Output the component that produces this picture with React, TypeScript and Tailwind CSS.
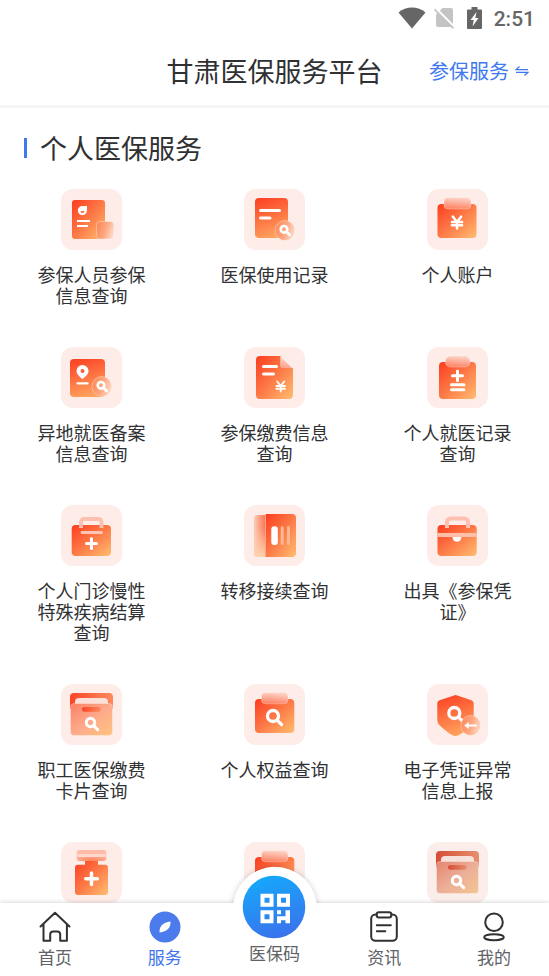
import React from 'react';

type TileProps = { children: React.ReactNode; className?: string };

const Tile = ({ children, className = '' }: TileProps) => (
  <svg viewBox="0 0 61 61" className={`w-[61px] h-[61px] ${className}`} aria-hidden="true">
    <rect width="61" height="61" rx="12" fill="#feece8" />
    {children}
  </svg>
);

const MAIN = 'url(#main)';
const FROST = 'url(#frost)';

// Shared gradients, referenced by every tile
const Gradients = () => (
  <svg width="0" height="0" className="absolute" aria-hidden="true">
    <defs>
      <linearGradient id="main" x1="0" y1="0" x2="1" y2="1">
        <stop offset="0" stopColor="#fb3c1f" />
        <stop offset="0.5" stopColor="#fd7a47" />
        <stop offset="1" stopColor="#ffbd70" />
      </linearGradient>
      <linearGradient id="upright" x1="0.2" y1="0" x2="0.5" y2="1">
        <stop offset="0" stopColor="#fb4425" />
        <stop offset="1" stopColor="#ffa25e" />
      </linearGradient>
      <linearGradient id="frost" x1="0" y1="1" x2="0.2" y2="0">
        <stop offset="0" stopColor="#fc7c5c" />
        <stop offset="1" stopColor="#fdd0c3" />
      </linearGradient>
      <linearGradient id="side" x1="0" y1="0" x2="1" y2="0">
        <stop offset="0" stopColor="#fecdb9" />
        <stop offset="1" stopColor="#fc7350" />
      </linearGradient>
      <linearGradient id="sideFade" x1="0" y1="0" x2="0" y2="1">
        <stop offset="0.3" stopColor="#ffd2ae" stopOpacity="0" />
        <stop offset="1" stopColor="#ffd2ae" />
      </linearGradient>
      <linearGradient id="lens" x1="0" y1="0.3" x2="1" y2="0.6">
        <stop offset="0" stopColor="#fd8a58" />
        <stop offset="0.5" stopColor="#fda57e" />
        <stop offset="1" stopColor="#fedccb" />
      </linearGradient>
      <linearGradient id="folder" x1="0" y1="0" x2="1" y2="1">
        <stop offset="0" stopColor="#fc7f64" />
        <stop offset="0.5" stopColor="#fdaa8c" />
        <stop offset="1" stopColor="#ffc47e" />
      </linearGradient>
      <linearGradient id="slot" x1="0" y1="0" x2="1" y2="0">
        <stop offset="0" stopColor="#fb4425" />
        <stop offset="1" stopColor="#fd8a5e" />
      </linearGradient>
      <radialGradient id="cap" cx="0.5" cy="1" r="0.7">
        <stop offset="0" stopColor="#fc8158" />
        <stop offset="1" stopColor="#fdbba8" />
      </radialGradient>
      <linearGradient id="code" x1="0.3" y1="0" x2="0.6" y2="1">
        <stop offset="0" stopColor="#14a9fb" />
        <stop offset="1" stopColor="#3b72ec" />
      </linearGradient>
    </defs>
  </svg>
);

const Magnifier = ({ x, y, r, w, len }: { x: number; y: number; r: number; w: number; len: number }) => (
  <g fill="none" stroke="#fff" strokeWidth={w} strokeLinecap="round">
    <circle cx={x} cy={y} r={r} />
    <path d={`M${x + r * 0.75} ${y + r * 0.75}l${len} ${len}`} />
  </g>
);

const Yen = ({ x, y, s, w }: { x: number; y: number; s: number; w: number }) => (
  <path
    d={`M${x - s * 0.7} ${y - s}L${x} ${y - s * 0.1}L${x + s * 0.7} ${y - s}M${x} ${y - s * 0.1}V${y + s}M${x - s * 0.85} ${y - s * 0.1}H${x + s * 0.85}M${x - s * 0.85} ${y + s * 0.45}H${x + s * 0.85}`}
    fill="none"
    stroke="#fff"
    strokeWidth={w}
    strokeLinecap="round"
  />
);

const Lens = ({ x, y }: { x: number; y: number }) => (
  <circle cx={x} cy={y} r="10" fill="url(#lens)" stroke="#fff" strokeOpacity="0.35" />
);

const MemberIcon = () => (
  <Tile>
    <rect x="11" y="11" width="33" height="39" rx="3" fill={MAIN} />
    <path d="M21.5 17h4.5v4.500a4.600 4.600 0 1 1-4.500-4.500z" fill="#fff" />
    <path d="M19.500 22h4a2 2 0 0 1-4 0z" fill="#fc6a42" />
    <path d="M16 32h13M16 37h11" stroke="#fff" strokeWidth="2" />
    <rect x="35.500" y="32.500" width="17.500" height="17.500" rx="3.500" fill="url(#lens)" stroke="#fff" strokeOpacity="0.35" />
  </Tile>
);

const RecordIcon = () => (
  <Tile>
    <rect x="11" y="9" width="33" height="40" rx="4" fill="url(#upright)" />
    <path d="M16.500 21.500h19M16.500 29h9.500" stroke="#fff" strokeWidth="3" strokeLinecap="round" />
    <Lens x={41} y={41.5} />
    <Magnifier x={40} y={40.3} r={3.3} w={2.6} len={3.2} />
  </Tile>
);

const AccountIcon = () => (
  <Tile>
    <rect x="10.500" y="15" width="39" height="34" rx="4" fill={MAIN} />
    <rect x="17" y="8.500" width="27" height="11.500" rx="4" fill={FROST} stroke="#fff" strokeOpacity="0.3" />
    <Yen x={30} y={33.5} s={6} w={2.5} />
  </Tile>
);

const RemoteIcon = () => (
  <Tile>
    <rect x="9" y="12" width="35" height="38" rx="4" fill="url(#upright)" />
    <path d="M21.500 18a6 6 0 0 1 6 6c0 3.500-3.600 5.700-6 8.300-2.400-2.600-6-4.800-6-8.300a6 6 0 0 1 6-6z" fill="#fff" />
    <circle cx="21.500" cy="24" r="2" fill="#fc5a36" />
    <path d="M16.500 36.300h10" stroke="#fff" strokeWidth="2.300" strokeLinecap="round" />
    <Lens x={41} y={39.5} />
    <Magnifier x={40} y={38.3} r={3.3} w={2.6} len={3.2} />
  </Tile>
);

const PaymentIcon = () => (
  <Tile>
    <path d="M16 9h20.500v9.500a2.500 2.500 0 0 0 2.500 2.500h10v27a4 4 0 0 1-4 4H16a4 4 0 0 1-4-4V13a4 4 0 0 1 4-4z" fill={MAIN} />
    <path d="M36.500 9.500L48 21H39a2.500 2.500 0 0 1-2.500-2.500z" fill={FROST} opacity="0.7" />
    <path d="M19.500 19.500h13M19.500 27h10" stroke="#fff" strokeWidth="3" strokeLinecap="round" />
    <Yen x={36.7} y={39.5} s={5} w={1.8} />
  </Tile>
);

const VisitIcon = () => (
  <Tile>
    <rect x="12" y="15" width="37" height="37" rx="4" fill={MAIN} />
    <rect x="18.500" y="9" width="24.500" height="11" rx="5" fill={FROST} stroke="#fff" strokeOpacity="0.3" />
    <path d="M30.500 24v9.500M25.500 28.700h10M24.500 37.700h12.500M24.500 42.700h12.500" stroke="#fff" strokeWidth="3" strokeLinecap="round" />
  </Tile>
);

const ClinicIcon = () => (
  <Tile>
    <rect x="10.700" y="20" width="39.300" height="31" rx="4" fill={MAIN} />
    <path d="M20 23v-6a3 3 0 0 1 3-3h14.500a3 3 0 0 1 3 3v6" fill="none" stroke="#fdc0b0" strokeWidth="3.800" />
    <path d="M21 27.500h19.500" stroke="#fdc6b4" strokeWidth="2.800" strokeLinecap="round" />
    <path d="M30.500 33.500v10M25.500 38.500h10" stroke="#fff" strokeWidth="3" strokeLinecap="round" />
  </Tile>
);

const TransferIcon = () => (
  <Tile>
    <path d="M13 10h8.500v42H13a3 3 0 0 1-3-3V13a3 3 0 0 1 3-3z" fill="url(#side)" />
    <path d="M13 10h8.500v42H13a3 3 0 0 1-3-3V13a3 3 0 0 1 3-3z" fill="url(#sideFade)" />
    <path d="M21.500 9H48a4 4 0 0 1 4 4v35a4 4 0 0 1-4 4H21.500z" fill={MAIN} />
    <path d="M21.500 9v43" stroke="#fda78c" />
    <rect x="27.300" y="21.300" width="6.500" height="18.700" rx="3" fill="#fff" />
    <path d="M38.200 22.500v16M44.500 22.500v16" stroke="#feb794" strokeWidth="3" strokeLinecap="round" />
  </Tile>
);

const CertificateIcon = () => (
  <Tile>
    <rect x="10.500" y="20" width="39.200" height="31" rx="4" fill={MAIN} />
    <path d="M20 23v-6a3.500 3.500 0 0 1 3.500-3.500h14a3.500 3.500 0 0 1 3.500 3.500v6" fill="none" stroke="#fdc0b0" strokeWidth="4" />
    <path d="M10.500 28h39.200v4H10.500z" fill="#fdbfa9" />
    <path d="M25.500 32h9a4.500 4.800 0 0 1-9 0z" fill="#fff" />
  </Tile>
);

const FolderIcon = ({ className }: { className?: string }) => (
  <Tile className={className}>
    <path d="M13 9h35a4 4 0 0 1 4 4v12H9V13a4 4 0 0 1 4-4z" fill="url(#slot)" />
    <rect x="14" y="14" width="33" height="12" rx="4" fill="#fde0d8" />
    <rect x="9.500" y="19.500" width="42" height="32" rx="3.500" fill="url(#folder)" stroke="#fff" strokeOpacity="0.3" />
    <rect x="21" y="23" width="18.700" height="4.700" rx="2.300" fill="url(#slot)" />
    <Magnifier x={29.5} y={38.5} r={4.2} w={3} len={4} />
  </Tile>
);

const RightsIcon = () => (
  <Tile>
    <rect x="11" y="15" width="39.300" height="34" rx="4" fill={MAIN} />
    <rect x="17.500" y="8.500" width="26.500" height="11.300" rx="4" fill={FROST} stroke="#fff" strokeOpacity="0.3" />
    <Magnifier x={29} y={32} r={5.5} w={3.3} len={4.5} />
  </Tile>
);

const ShieldIcon = () => (
  <Tile>
    <path d="M27 11.500q1.600-.8 3.200 0l14.300 4.700q2.200.8 2.200 3v17q0 3-2.200 5c-4 4-8 7-12.500 9.800q-3.500 2-7 0c-4.500-2.800-8.500-5.800-12.500-9.800q-2.200-2-2.200-5v-17q0-2.200 2.200-3z" fill="url(#upright)" />
    <Magnifier x={27.3} y={29} r={5.5} w={3.3} len={4.5} />
    <Lens x={43.8} y={41.5} />
    <path d="M40 41.500h9" stroke="#fff" strokeWidth="2" strokeLinecap="round" />
    <path d="M37.500 41.500l4-3v6z" fill="#fff" stroke="#fff" strokeWidth="0.500" strokeLinejoin="round" />
  </Tile>
);

const BottleIcon = () => (
  <Tile>
    <path d="M24 18h13v4.700h7a3 3 0 0 1 3 3V50a3 3 0 0 1-3 3H17a3 3 0 0 1-3-3V25.700a3 3 0 0 1 3-3h7z" fill={MAIN} />
    <rect x="15.700" y="8" width="29.600" height="11" rx="3" fill="url(#cap)" />
    <path d="M16.500 12h28v3h-28z" fill="#fedace" />
    <path d="M30.500 31v11.500M24.800 36.700h11.500" stroke="#fff" strokeWidth="3.500" strokeLinecap="round" />
  </Tile>
);

const services = [
  { label: '参保人员参保信息查询', icon: <MemberIcon /> },
  { label: '医保使用记录', icon: <RecordIcon /> },
  { label: '个人账户', icon: <AccountIcon /> },
  { label: '异地就医备案信息查询', icon: <RemoteIcon /> },
  { label: '参保缴费信息查询', icon: <PaymentIcon /> },
  { label: '个人就医记录查询', icon: <VisitIcon /> },
  { label: '个人门诊慢性特殊疾病结算查询', icon: <ClinicIcon /> },
  { label: '转移接续查询', icon: <TransferIcon /> },
  { label: '出具《参保凭证》', icon: <CertificateIcon /> },
  { label: '职工医保缴费卡片查询', icon: <FolderIcon /> },
  { label: '个人权益查询', icon: <RightsIcon /> },
  { label: '电子凭证异常信息上报', icon: <ShieldIcon /> },
  { label: '', icon: <BottleIcon /> },
  { label: '', icon: <RightsIcon /> },
  { label: '', icon: <FolderIcon className="saturate-75" /> },
];

const StatusBar = () => (
  <div className="flex h-9 shrink-0 items-center justify-end pr-[14px] text-[#666]">
    <svg viewBox="0 0 28 22" className="mr-2 h-[22px] w-7" fill="currentColor" aria-hidden="true">
      <path d="M.5 5.500C8-1.300 20-1.300 27.500 5.500L14 21.500z" />
    </svg>
    <svg viewBox="0 0 21 22" className="mr-3 h-[22px] w-[21px]" aria-hidden="true">
      <path d="M8.500 1H17a2 2 0 0 1 2 2v17H4a2 2 0 0 1-2-2V7.500z" fill="#c4c4c4" />
      <path d="M1 1l20 20" stroke="#fff" strokeWidth="3" />
      <path d="M.5 2.300l19 19" stroke="#c4c4c4" strokeWidth="1.800" />
    </svg>
    <svg viewBox="0 0 15 22" className="mr-3 h-[22px] w-[15px]" aria-hidden="true">
      <path d="M4.500 0h6v2.500H14q1 0 1 1V21q0 1-1 1H1q-1 0-1-1V3.500q0-1 1-1h3.500z" fill="currentColor" />
      <path d="M9.500 5L3.500 13h3.300L5.500 19.500l6-8.500H8.300z" fill="#fff" />
    </svg>
    <span className="font-[Roboto,sans-serif] pt-[2px] text-[21px] font-medium leading-none">2:51</span>
  </div>
);

const HomeIcon = () => (
  <svg viewBox="0 0 32 32" className="h-8 w-8" fill="none" stroke="#303133" strokeWidth="2" strokeLinecap="round" strokeLinejoin="round" aria-hidden="true">
    <path d="M1.500 15.500L16 1.800l14.500 13.700M4.500 13v16.800h6.700v-6.300q0-3 3-3h4q3 0 3 3v6.300h6.700V13" />
  </svg>
);

const CompassIcon = () => (
  <svg viewBox="0 0 32 32" className="h-8 w-8" aria-hidden="true">
    <circle cx="16" cy="16" r="15.500" fill="#4b7bec" />
    <path d="M21.500 10.500q.5 9.500-11 11-.5-9.500 11-11z" fill="#fff" />
  </svg>
);

const NewsIcon = () => (
  <svg viewBox="0 0 32 32" className="h-8 w-8" fill="none" stroke="#303133" strokeWidth="2" strokeLinecap="round" strokeLinejoin="round" aria-hidden="true">
    <path d="M8.500 3.500H7.500a4.300 4.300 0 0 0-4.300 4.300v17.700a4.300 4.300 0 0 0 4.300 4.300h17a4.300 4.300 0 0 0 4.300-4.300V7.800a4.300 4.300 0 0 0-4.300-4.300H23.500" />
    <rect x="8.700" y="1.300" width="14.600" height="5.200" rx="2.200" />
    <path d="M8.800 14.300h14M8.800 20.300h8.500" />
  </svg>
);

const UserIcon = () => (
  <svg viewBox="0 0 32 32" className="h-8 w-8" fill="none" stroke="#303133" strokeWidth="2" aria-hidden="true">
    <circle cx="16" cy="11.200" r="8.800" />
    <ellipse cx="16" cy="26.200" rx="9.800" ry="3" />
  </svg>
);

const tabs = [
  { label: '首页', icon: <HomeIcon /> },
  { label: '服务', icon: <CompassIcon />, active: true },
  { label: '医保码', center: true },
  { label: '资讯', icon: <NewsIcon /> },
  { label: '我的', icon: <UserIcon /> },
];

const TabBar = () => (
  <nav className="relative z-10 h-[73px] shrink-0">
    <div className="absolute -top-9 left-1/2 h-[84px] w-[84px] -translate-x-1/2 rounded-full bg-white shadow-[0_0_6px_rgba(0,0,0,0.2)]" />
    <div className="absolute inset-0 bg-white shadow-[0_-1px_4px_rgba(0,0,0,0.15)]" />
    <div className="absolute -top-9 left-1/2 h-[84px] w-[84px] -translate-x-1/2 rounded-full bg-white" />
    <div className="relative grid h-full grid-cols-5">
      {tabs.map((tab) =>
        tab.center ? (
          <a key={tab.label} href="#code" className="-mt-7 flex flex-col items-center gap-[2px] text-[17px] leading-6 text-[#606266]">
            <svg viewBox="0 0 64 64" className="h-16 w-16 shrink-0" aria-hidden="true">
              <circle cx="32" cy="32" r="31.300" fill="url(#code)" />
              <path d="M20.500 20.800h9v9h-9zM37 20.800h9v9h-9zM20.500 37.300h9v9h-9z" fill="none" stroke="#fff" strokeWidth="4" />
              <path d="M35 35.300h4v4h-4zM35 41.300h8.500v-6H48v13h-4.500v-3H39v3h-4z" fill="#fff" />
            </svg>
            {tab.label}
          </a>
        ) : (
          <a
            key={tab.label}
            href="#tab"
            className={`flex flex-col items-center gap-[2px] pt-2 text-[17px] leading-6 ${tab.active ? 'text-[#3f74ec]' : 'text-[#606266]'}`}
          >
            {tab.icon}
            {tab.label}
          </a>
        )
      )}
    </div>
  </nav>
);

export default function App() {
  return (
    <div className="flex h-screen flex-col overflow-hidden bg-white font-['Noto_Sans_CJK_SC',sans-serif] text-[#303133]">
      <Gradients />
      <StatusBar />

      <header className="grid h-[72px] shrink-0 grid-cols-[1fr_auto_1fr] items-center border-b-3 border-[#f5f5f5]">
        <h1 className="col-start-2 text-[27px] leading-10">甘肃医保服务平台</h1>
        <button className="flex items-center gap-[6px] justify-self-end pr-5 text-[20px] leading-8 text-[#4078f0]">
          参保服务
          <svg viewBox="0 0 14 10" className="h-[10px] w-[14px]" fill="none" stroke="currentColor" strokeWidth="1.300" aria-hidden="true">
            <path d="M4.500.6L1 3.700h12M9.500 9.400L13 6.300H1" />
          </svg>
        </button>
      </header>

      <main className="min-h-0 flex-1 overflow-hidden">
        <div className="flex items-center gap-[13px] pl-6 pt-5">
          <span className="h-5 w-[3px] bg-[#4078f0]" />
          <h2 className="text-[27px] leading-10">个人医保服务</h2>
        </div>
        <div className="mt-[21px] grid grid-cols-3 gap-y-[41px]">
          {services.map((service, i) => (
            <a key={i} href="#service" className="flex flex-col items-center">
              {service.icon}
              <span className="mt-[14px] w-[114px] text-center text-[18px] leading-[21px]">{service.label}</span>
            </a>
          ))}
        </div>
      </main>

      <TabBar />
    </div>
  );
}
